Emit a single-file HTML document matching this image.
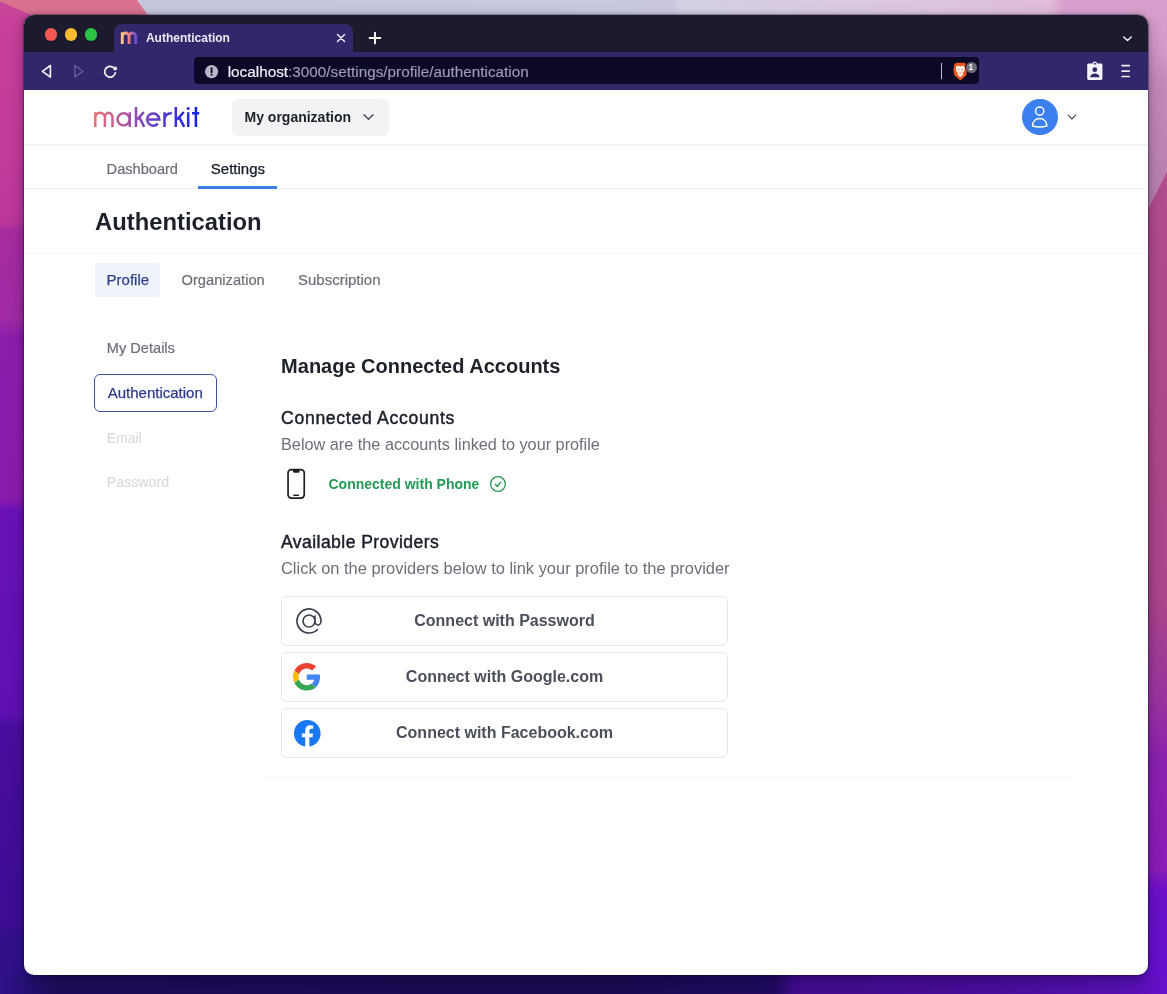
<!DOCTYPE html>
<html><head><meta charset="utf-8">
<style>
*{box-sizing:border-box;margin:0;padding:0}
html,body{width:1167px;height:994px;overflow:hidden}
body{position:relative;font-family:"Liberation Sans",sans-serif;background:#4a10a0}
.a{position:absolute}
.t{position:absolute;white-space:nowrap;line-height:1}
svg{position:absolute;overflow:visible}
</style></head><body>
<div style="position:absolute;left:0;top:0;width:1167px;height:994px;will-change:transform">
<div class="a" style="left:0;top:0;width:1167px;height:994px;background:linear-gradient(180deg,#d8708e 0px,#c8409a 12px,#c23c9a 150px,#bc369c 222px,#a62ca0 232px,#a02aa4 320px,#8c1eac 338px,#8a1cac 500px,#6a12b8 510px,#5e10b2 715px,#4a0e9e 725px,#3c0c92 925px,#30108a 937px,#2e1086 994px)"></div>
<svg style="left:1140px;top:0" width="27" height="994" viewBox="1140 0 27 994"><defs><linearGradient id="rs1" gradientUnits="userSpaceOnUse" x1="0" y1="0" x2="0" y2="994"><stop offset="0" stop-color="#b8508e"/><stop offset="0.2" stop-color="#b24c8c"/><stop offset="0.6" stop-color="#aa468a"/><stop offset="0.705" stop-color="#9a34a0"/><stop offset="0.765" stop-color="#8c22b0"/><stop offset="0.875" stop-color="#8a1cb8"/><stop offset="0.895" stop-color="#6c10c8"/><stop offset="1" stop-color="#6410d0"/></linearGradient><linearGradient id="rs2" gradientUnits="userSpaceOnUse" x1="0" y1="0" x2="0" y2="225"><stop offset="0" stop-color="#d8a0cc"/><stop offset="0.22" stop-color="#d49ac8"/><stop offset="0.36" stop-color="#c48ab8"/><stop offset="1" stop-color="#b67eac"/></linearGradient></defs><rect x="1140" y="0" width="27" height="994" fill="url(#rs1)"/><polygon points="1140,0 1167,0 1167,172 1140,225" fill="url(#rs2)"/></svg>
<svg style="left:0;top:0" width="1167" height="18" viewBox="0 0 1167 18"><defs><linearGradient id="ts" gradientUnits="userSpaceOnUse" x1="0" y1="0" x2="1167" y2="0"><stop offset="0" stop-color="#c4c6dc"/><stop offset="0.55" stop-color="#c8c8e0"/><stop offset="0.578" stop-color="#ccc8e0"/><stop offset="0.583" stop-color="#d4d0e4"/><stop offset="0.77" stop-color="#dcc8e0"/><stop offset="0.9" stop-color="#e0bcd8"/><stop offset="0.912" stop-color="#d8a0cc"/><stop offset="1" stop-color="#d8a0cc"/></linearGradient></defs>
<rect x="0" y="0" width="1167" height="18" fill="url(#ts)"/><polygon points="0,0 137,0 150,18 0,18" fill="#d8728f"/><polygon points="0,1.5 30,14.5 31,18 0,18" fill="#c8449a"/></svg>
<div class="a" style="left:0;top:975px;width:1167px;height:19px;background:linear-gradient(90deg,#2e1086 0px,#28107a 20px,#1c0c58 60px,#1a0a50 600px,#200a60 775px,#420c8e 795px,#4a0e9c 1000px,#5810b4 1130px,#6810cc 1167px)"></div>
<div class="a" style="left:24px;top:15px;width:1124px;height:960px;border-radius:10px;overflow:hidden;background:#fff;box-shadow:0 0 0 0.6px rgba(20,10,40,.5),0 0 5px rgba(20,0,40,.28),0 6px 16px rgba(10,0,40,.3)">
<div class="a" style="left:0px;top:0px;width:1124.00px;height:37.00px;background:#1c1b2e"></div>
<div class="a" style="left:89.5px;top:8.5px;width:239.50px;height:29.50px;background:#30286a;border-radius:8px 8px 0 0"></div>
<div class="a" style="left:0px;top:37px;width:1124.00px;height:37.50px;background:#30286a"></div>
</div>
<div class="a" style="left:44.95px;top:28.35px;width:12.50px;height:12.50px;border-radius:50%;background:#f85851"></div>
<div class="a" style="left:64.85px;top:28.35px;width:12.50px;height:12.50px;border-radius:50%;background:#fabb2e"></div>
<div class="a" style="left:84.75px;top:28.35px;width:12.50px;height:12.50px;border-radius:50%;background:#2ac642"></div>
<svg style="left:110px;top:25px" width="35" height="25" viewBox="110 25 35 25"><defs><linearGradient id="fm" gradientUnits="userSpaceOnUse" x1="121" y1="0" x2="137" y2="0"><stop offset="0" stop-color="#f7d084"/><stop offset="0.5" stop-color="#ee7e82"/><stop offset="1" stop-color="#5a48d8"/></linearGradient></defs>
<path d="M122.3 43.9V32.2M122.3 36.4A3.4 3.4 0 0 1 129.1 36.4V43.9M129.1 36.4A3.35 3.35 0 0 1 135.8 36.4V43.9" fill="none" stroke="url(#fm)" stroke-width="2.9"/></svg>
<div class="t" style="left:145.90px;top:31.74px;font-size:12px;font-weight:bold;color:#ece8f6;">Authentication</div>
<svg style="left:337px;top:34px" width="8" height="8" viewBox="0 0 8 8"><path d="M0.5 0.5L7.5 7.5M7.5 0.5L0.5 7.5" stroke="#f0eef8" stroke-width="1.5" stroke-linecap="round"/></svg>
<svg style="left:369px;top:32.2px" width="12" height="12" viewBox="0 0 12 12"><path d="M6 0.6V11.4M0.6 6H11.4" stroke="#ffffff" stroke-width="1.9" stroke-linecap="round"/></svg>
<svg style="left:1123px;top:35.6px" width="9" height="6" viewBox="0 0 9 6"><path d="M0.8 0.9L4.5 4.6L8.2 0.9" fill="none" stroke="#f4f2fa" stroke-width="1.45" stroke-linecap="round" stroke-linejoin="round"/></svg>
<svg style="left:41px;top:64px" width="12" height="15" viewBox="0 0 12 15"><path d="M9.4 1.5L1.4 7.3L9.4 13.1Z" fill="none" stroke="#f4f2fa" stroke-width="1.65" stroke-linejoin="round"/></svg>
<svg style="left:73px;top:64px" width="12" height="15" viewBox="0 0 12 15"><path d="M1.9 1.5L9.9 7.3L1.9 13.1Z" fill="none" stroke="#675c9c" stroke-width="1.4" stroke-linejoin="round"/></svg>
<svg style="left:103px;top:64.5px" width="15" height="15" viewBox="0 0 15 15"><path d="M9.74 2.13A5.35 5.35 0 1 0 12.29 7.87" fill="none" stroke="#f4f2fa" stroke-width="1.75" stroke-linecap="round"/><circle cx="12.1" cy="3.5" r="2" fill="#f4f2fa"/></svg>
<div class="a" style="left:193.5px;top:57px;width:785.00px;height:27.00px;background:#0c0926;border-radius:4px"></div>
<svg style="left:204.5px;top:64.7px" width="13.2" height="13.2" viewBox="0 0 13.2 13.2"><circle cx="6.6" cy="6.6" r="6.6" fill="#b9b6c7"/><path d="M6.6 3.2V7.4" stroke="#0d0a24" stroke-width="1.8" stroke-linecap="round"/><circle cx="6.6" cy="9.8" r="1" fill="#0d0a24"/></svg>
<div class="t" style="left:227.70px;top:63.55px;font-size:15.3px;font-weight:normal;color:#a09cb6;"><span style="color:#f0eefa;-webkit-text-stroke:0.2px #f0eefa">localhost</span><span style="-webkit-text-stroke:0.15px #a09cb6">:3000/settings/profile/authentication</span></div>
<div class="a" style="left:941px;top:63px;width:1.00px;height:16.00px;background:#bdb9d2"></div>
<svg style="left:952.5px;top:61.5px" width="15" height="19" viewBox="0 0 15 19"><path d="M3 0.8L11.5 0.8L13.8 3.2L13.4 5.5L14.5 7.6L13 13.5L7.3 18.4L1.5 13.5L0.2 7.6L1.2 5.5L0.8 3.2Z" fill="#f0561e"/><path d="M3.0 4.6L5.8 3.8L7.3 4.5L8.8 3.8L11.6 4.6L11.6 8.6L9.9 10.4L10.1 12.6L7.3 15.2L4.5 12.6L4.7 10.4L3.0 8.6Z" fill="#fff4ee"/><path d="M4.8 7.2L6.4 8.2M9.8 7.2L8.2 8.2M6.2 11.2H8.4" stroke="#f0561e" stroke-width="0.9"/></svg>
<div class="a" style="left:964.7px;top:60.7px;width:12.60px;height:12.60px;border-radius:50%;background:#0c0926"></div>
<div class="a" style="left:965.5px;top:61.5px;width:11.00px;height:11.00px;border-radius:50%;background:#6f6e78"></div>
<div class="t" style="left:968.60px;top:63.30px;font-size:8.5px;font-weight:bold;color:#ffffff;">1</div>
<svg style="left:1086px;top:60px" width="18" height="21" viewBox="0 0 18 21"><path d="M2.6 3.6H6.6A2.2 2.2 0 0 1 11.0 3.6H15.0A1.4 1.4 0 0 1 16.4 5V18.6A1.4 1.4 0 0 1 15 20H2.6A1.4 1.4 0 0 1 1.2 18.6V5A1.4 1.4 0 0 1 2.6 3.6Z" fill="#f4f2fa"/><circle cx="8.8" cy="3.8" r="1" fill="#30286a"/><circle cx="8.8" cy="9.7" r="2.4" fill="#30286a"/><path d="M4 17.2C4.4 14.8 6.4 13.5 8.8 13.5S13.2 14.8 13.6 17.2Z" fill="#30286a"/></svg>
<svg style="left:1115px;top:60px" width="20" height="22" viewBox="1115 60 20 22"><path d="M1122.1 65.6H1129.3M1122.1 71.1H1129.3M1122.1 76.5H1129.3" stroke="#eceaf6" stroke-width="1.7" stroke-linecap="round"/></svg><svg style="left:0px;top:0px" width="1167" height="200" viewBox="0 0 1167 200"><defs><linearGradient id="lg" gradientUnits="userSpaceOnUse" x1="94" y1="0" x2="199" y2="0"><stop offset="0" stop-color="#ec6e78"/><stop offset="0.28" stop-color="#b45a9c"/><stop offset="0.44" stop-color="#8449b8"/><stop offset="0.56" stop-color="#6a40c8"/><stop offset="0.77" stop-color="#3c30da"/><stop offset="1" stop-color="#1020f0"/></linearGradient></defs>
<g fill="none" stroke="url(#lg)" stroke-width="2.5">
<path d="M95.3 126.9V112.2M95.3 117.6A4.8 4.8 0 0 1 104.9 117.6V126.9M104.9 117.6A3.8 4.8 0 0 1 112.5 117.6V126.9"/>
<circle cx="123.6" cy="119.35" r="6.1"/>
<path d="M129.8 112.2V126.9"/>
<path d="M136 107.1V126.9M143.8 112L137.2 119.6M139.4 117.4L144.2 126.9"/>
<path d="M147.1 119.4H159.3A6.1 6.1 0 1 0 157.8 123.6"/>
<path d="M164.5 126.9V112.2M164.5 119.8C164.5 115.4 167.2 113.2 171.8 113.2"/>
<path d="M175.8 107.1V126.9M183.8 112L177 119.6M179.2 117.4L184.2 126.9"/>
<path d="M188.2 112.2V126.9M195.9 107.1V126.9M192 113.3H199.2"/>
</g><circle cx="188.2" cy="108.4" r="1.5" fill="#2828e8"/></svg>
<div class="a" style="left:231.5px;top:98.5px;width:157.00px;height:37.30px;background:#f2f3f5;border-radius:6px"></div>
<div class="t" style="left:244.50px;top:109.95px;font-size:14px;font-weight:bold;color:#1d2129;">My organization</div>
<svg style="left:360px;top:110px" width="18" height="14" viewBox="360 110 18 14"><path d="M364 114.7L368.5 119.4L373 114.7" fill="none" stroke="#3a3f48" stroke-width="1.3" stroke-linecap="round" stroke-linejoin="round"/></svg><div class="a" style="left:1022px;top:99px;width:36.00px;height:36.00px;border-radius:50%;background:#3b80ee"></div>
<svg style="left:1022px;top:99px" width="36" height="36" viewBox="0 0 36 36"><circle cx="17.7" cy="12.1" r="4.15" fill="none" stroke="#fff" stroke-width="1.45"/><path d="M10.6 27.0C10.6 22.2 13.7 19.4 17.7 19.4S24.8 22.2 24.8 27.0Q17.7 29.0 10.6 27.0Z" fill="none" stroke="#fff" stroke-width="1.45" stroke-linejoin="round"/></svg>
<svg style="left:1067px;top:114px" width="10" height="7" viewBox="0 0 10 7"><path d="M1.2 1.2L4.9 5L8.6 1.2" fill="none" stroke="#4b5563" stroke-width="1.2" stroke-linecap="round" stroke-linejoin="round"/></svg>
<div class="a" style="left:24px;top:144px;width:1124.00px;height:1.50px;background:#f2f3f5"></div>
<div class="t" style="left:106.60px;top:161.84px;font-size:14.6px;font-weight:normal;color:#6b6f78;-webkit-text-stroke:0.2px #6b6f78">Dashboard</div>
<div class="t" style="left:210.80px;top:160.50px;font-size:15px;font-weight:normal;color:#111827;-webkit-text-stroke:0.25px #111827">Settings</div>
<div class="a" style="left:24px;top:188px;width:1124.00px;height:1.00px;background:#f2f3f5"></div>
<div class="a" style="left:198px;top:186px;width:79.00px;height:3.00px;background:#3d7ee4"></div>
<div class="t" style="left:95.00px;top:209.85px;font-size:23.8px;font-weight:bold;color:#1d2129;">Authentication</div>
<div class="a" style="left:24px;top:253px;width:1124.00px;height:1.00px;background:#f3f4f6"></div>
<div class="a" style="left:94.5px;top:263px;width:65.50px;height:33.50px;background:#eef3fc;border-radius:3px"></div>
<div class="t" style="left:106.60px;top:272.20px;font-size:15px;font-weight:normal;color:#33418c;-webkit-text-stroke:0.25px #33418c">Profile</div>
<div class="t" style="left:181.50px;top:273.16px;font-size:14.7px;font-weight:normal;color:#6b6f78;-webkit-text-stroke:0.2px #6b6f78">Organization</div>
<div class="t" style="left:298.00px;top:272.20px;font-size:15px;font-weight:normal;color:#6b6f78;-webkit-text-stroke:0.2px #6b6f78">Subscription</div>
<div class="t" style="left:106.80px;top:340.84px;font-size:14.6px;font-weight:normal;color:#6b6f78;-webkit-text-stroke:0.2px #6b6f78">My Details</div>
<div class="a" style="left:94.1px;top:374px;width:122.70px;height:37.80px;border:1.2px solid #3f51a3;border-radius:6px"></div>
<div class="t" style="left:107.70px;top:385.20px;font-size:15px;font-weight:normal;color:#2b3a8c;-webkit-text-stroke:0.25px #2b3a8c">Authentication</div>
<div class="t" style="left:106.80px;top:431.35px;font-size:14px;font-weight:normal;color:#d9dadf;-webkit-text-stroke:0.15px #d9dadf">Email</div>
<div class="t" style="left:106.80px;top:474.68px;font-size:14.2px;font-weight:normal;color:#d9dadf;-webkit-text-stroke:0.15px #d9dadf">Password</div>
<div class="t" style="left:281.10px;top:356.27px;font-size:20px;font-weight:bold;color:#1d2129;">Manage Connected Accounts</div>
<div class="t" style="left:281.00px;top:409.60px;font-size:17.6px;font-weight:normal;color:#1a1f2a;-webkit-text-stroke:0.45px #1a1f2a;letter-spacing:0.7px">Connected Accounts</div>
<div class="t" style="left:281.00px;top:435.74px;font-size:16.25px;font-weight:normal;color:#6b6f78;">Below are the accounts linked to your profile</div>
<svg style="left:280px;top:460px" width="40" height="45" viewBox="280 460 40 45"><rect x="288.05" y="469.55" width="16.2" height="28.5" rx="3.3" fill="none" stroke="#1c1e26" stroke-width="1.7"/><path d="M293 469.5H299.5V471.4A1.3 1.3 0 0 1 298.2 472.7H294.3A1.3 1.3 0 0 1 293 471.4Z" fill="#1c1e26"/><rect x="293.3" y="494.5" width="5.7" height="1.5" rx="0.4" fill="#1c1e26"/></svg><div class="t" style="left:328.50px;top:477.15px;font-size:14px;font-weight:bold;color:#249a55;">Connected with Phone</div>
<svg style="left:480px;top:470px" width="30" height="30" viewBox="480 470 30 30"><circle cx="498" cy="484" r="7.35" fill="none" stroke="#259654" stroke-width="1.3"/><path d="M495.2 484.3L497.4 486.5L500.7 482.1" fill="none" stroke="#259654" stroke-width="1.3" stroke-linecap="round" stroke-linejoin="round"/></svg><div class="t" style="left:281.00px;top:533.90px;font-size:17.6px;font-weight:normal;color:#1a1f2a;-webkit-text-stroke:0.45px #1a1f2a;letter-spacing:0.42px">Available Providers</div>
<div class="t" style="left:281.00px;top:559.58px;font-size:16.45px;font-weight:normal;color:#6b6f78;">Click on the providers below to link your profile to the provider</div>
<div class="a" style="left:281px;top:596px;width:447.00px;height:50.00px;border:1px solid #e5e7eb;border-radius:6px"></div>
<div class="t" style="left:204.50px;width:600px;text-align:center;top:612.96px;font-size:16px;font-weight:bold;color:#4a4f5a;">Connect with Password</div>
<div class="a" style="left:281px;top:652px;width:447.00px;height:50.00px;border:1px solid #e5e7eb;border-radius:6px"></div>
<div class="t" style="left:204.50px;width:600px;text-align:center;top:668.96px;font-size:16px;font-weight:bold;color:#4a4f5a;">Connect with Google.com</div>
<div class="a" style="left:281px;top:708px;width:447.00px;height:49.50px;border:1px solid #e5e7eb;border-radius:6px"></div>
<div class="t" style="left:204.50px;width:600px;text-align:center;top:724.96px;font-size:16px;font-weight:bold;color:#4a4f5a;">Connect with Facebook.com</div>
<svg style="left:293.1px;top:604.9px" width="32" height="32" viewBox="0 0 24 24"><path d="M16.5 12a4.5 4.5 0 1 1-9 0 4.5 4.5 0 0 1 9 0Zm0 0c0 1.657 1.007 3 2.25 3S21 13.657 21 12a9 9 0 1 0-2.636 6.364M16.5 12V8.25" fill="none" stroke="#3b4049" stroke-width="1.25" stroke-linecap="round" stroke-linejoin="round"/></svg>
<svg style="left:293.3px;top:662.9px" width="27.6" height="27.6" viewBox="0 0 48 48"><path fill="#EA4335" d="M24 9.5c3.54 0 6.71 1.22 9.21 3.6l6.85-6.85C35.9 2.38 30.47 0 24 0 14.62 0 6.51 5.38 2.56 13.22l7.98 6.19C12.43 13.72 17.74 9.5 24 9.5z"/><path fill="#4285F4" d="M46.98 24.55c0-1.57-.15-3.09-.38-4.55H24v9.02h12.94c-.58 2.96-2.26 5.48-4.78 7.18l7.73 6c4.51-4.18 7.09-10.36 7.09-17.65z"/><path fill="#FBBC05" d="M10.53 28.59c-.48-1.45-.76-2.99-.76-4.59s.27-3.14.76-4.59l-7.98-6.19C.92 16.46 0 20.12 0 24c0 3.88.92 7.540 2.56 10.78l7.97-6.19z"/><path fill="#34A853" d="M24 48c6.48 0 11.93-2.13 15.89-5.81l-7.73-6c-2.15 1.45-4.92 2.3-8.16 2.3-6.26 0-11.570-4.22-13.47-9.91l-7.98 6.19C6.51 42.62 14.62 48 24 48z"/></svg>
<svg style="left:293.8px;top:719.5px" width="26.6" height="26.6" viewBox="0 0 24 24"><path fill="#1877F2" d="M24 12.073c0-6.627-5.373-12-12-12s-12 5.373-12 12c0 5.990 4.388 10.954 10.125 11.854v-8.385H7.078v-3.47h3.047V9.43c0-3.007 1.792-4.669 4.533-4.669 1.312 0 2.686.235 2.686.235v2.953H15.83c-1.491 0-1.956.925-1.956 1.874v2.25h3.328l-.532 3.47h-2.796v8.385C19.612 23.027 24 18.062 24 12.073z"/></svg>
<div class="a" style="left:265px;top:777px;width:810.00px;height:1.00px;background:#f6f7f8"></div>
</div></body></html>
